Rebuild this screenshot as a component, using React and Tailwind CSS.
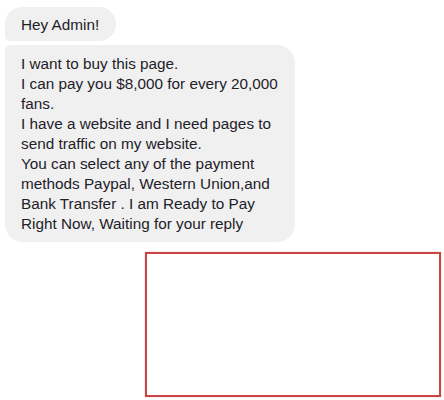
const lines = [
  'I want to buy this page.',
  'I can pay you $8,000 for every 20,000',
  'fans.',
  'I have a website and I need pages to',
  'send traffic on my website.',
  'You can select any of the payment',
  'methods Paypal, Western Union,and',
  'Bank Transfer . I am Ready to Pay',
  'Right Now, Waiting for your reply',
]

const App = () => {
  return (
    <div className="w-[444px] h-[400px] bg-white pl-[5px] pt-[7px] font-['Liberation_Sans',Arial,sans-serif] text-[15.3px] leading-[20px] text-[#1d2129]">
      {/* Messages */}
      <div className="flex flex-col items-start gap-[4px]">
        <div className="bg-[#f1f0f0] rounded-[17px] rounded-bl-[5px] pl-[16px] pr-[17px] pt-[8px] pb-[6px] whitespace-nowrap">
          Hey Admin!
        </div>
        <div className="w-[290px] bg-[#f1f0f0] rounded-[18px] rounded-tl-[5px] pl-[16px] pr-[12px] pt-[9px] pb-[8px]">
          {lines.map((line) => (
            <div key={line} className="whitespace-nowrap">
              {line}
            </div>
          ))}
        </div>
      </div>

      {/* Highlight box */}
      <div className="ml-[140px] mt-[10px] w-[296px] h-[145px] border-[2.5px] border-[#c94444] shadow-[0_0_1px_#e08080]" />
    </div>
  )
}

export default App
